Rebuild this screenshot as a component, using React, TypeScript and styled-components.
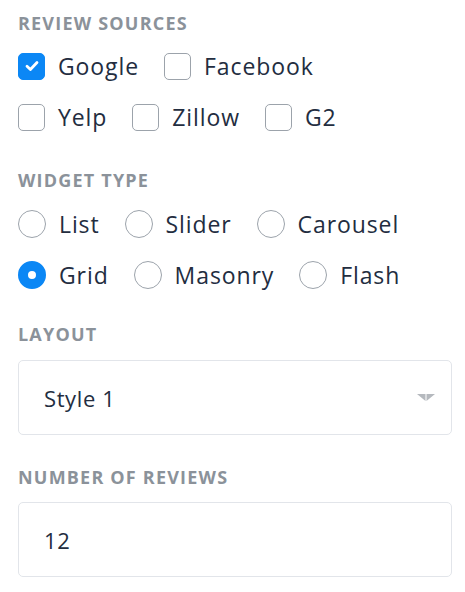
import React from "react";
import styled, { createGlobalStyle } from "styled-components";

const Global = createGlobalStyle`
  html, body { margin: 0; padding: 0; background: #ffffff; }
  body { font-family: "Open Sans", "Liberation Sans", sans-serif; }
`;

const Panel = styled.div`
  width: 465px;
  box-sizing: border-box;
  padding: 12px 13px 0 18px;
  display: flex;
  flex-direction: column;
`;

const Label = styled.div<{ $mt?: number }>`
  font-family: "Open Sans", sans-serif;
  font-weight: 700;
  font-size: 18px;
  line-height: 22px;
  color: #8b929a;
  letter-spacing: 1.2px;
  margin-top: ${(p) => p.$mt ?? 0}px;
`;

const OptionRow = styled.div<{ $mt: number }>`
  display: flex;
  align-items: center;
  margin-top: ${(p) => p.$mt}px;
  height: 28px;
`;

const Option = styled.label`
  display: flex;
  align-items: center;
  gap: 13px;
  margin-right: 25px;
  font-size: 23px;
  color: #232d3f;
  letter-spacing: 0.9px;
`;

const Box = styled.span<{ $on?: boolean }>`
  width: 27px;
  height: 27px;
  box-sizing: border-box;
  border-radius: 5px;
  border: 1px solid ${(p) => (p.$on ? "#0b87f5" : "#9ca3ab")};
  background: ${(p) => (p.$on ? "#0b87f5" : "#fff")};
  display: inline-flex;
  align-items: center;
  justify-content: center;
  flex: none;
`;

const Circle = styled.span<{ $on?: boolean }>`
  width: 28px;
  height: 28px;
  box-sizing: border-box;
  border-radius: 50%;
  border: ${(p) => (p.$on ? "10px solid #0b87f5" : "1px solid #9ca3ab")};
  background: #fff;
  flex: none;
`;

const Field = styled.div<{ $mt: number }>`
  margin-top: ${(p) => p.$mt}px;
  height: 75px;
  box-sizing: border-box;
  border: 1px solid #e2e5ea;
  border-radius: 5px;
  display: flex;
  align-items: center;
  justify-content: space-between;
  padding: 0 16px 0 25px;
  font-size: 22px;
  letter-spacing: 0.6px;
  color: #232d3f;
`;

const Check = () => (
  <svg width="16" height="16" viewBox="0 0 16 16">
    <path d="M3 8.3 L6.4 11.5 L13 4.5" fill="none" stroke="#fff" strokeWidth="2.8" strokeLinecap="round" strokeLinejoin="round" />
  </svg>
);

const Arrow = () => (
  <svg width="18" height="7" viewBox="0 0 18 7">
    <path d="M0 0 H8.5 V7 Z M9.5 0 H18 L9.5 7 Z" fill="#b5b9be" />
  </svg>
);

export default function App() {
  return (
    <>
      <Global />
      <Panel>
        <Label>REVIEW SOURCES</Label>
        <OptionRow $mt={18}>
          <Option><Box $on><Check /></Box>Google</Option>
          <Option><Box />Facebook</Option>
        </OptionRow>
        <OptionRow $mt={23}>
          <Option><Box />Yelp</Option>
          <Option><Box />Zillow</Option>
          <Option><Box />G2</Option>
        </OptionRow>
        <Label $mt={38}>WIDGET TYPE</Label>
        <OptionRow $mt={19}>
          <Option><Circle />List</Option>
          <Option><Circle />Slider</Option>
          <Option><Circle />Carousel</Option>
        </OptionRow>
        <OptionRow $mt={23}>
          <Option><Circle $on />Grid</Option>
          <Option><Circle />Masonry</Option>
          <Option><Circle />Flash</Option>
        </OptionRow>
        <Label $mt={34}>LAYOUT</Label>
        <Field $mt={15}>
          <span>Style 1</span>
          <Arrow />
        </Field>
        <Label $mt={31}>NUMBER OF REVIEWS</Label>
        <Field $mt={14}>
          <span>12</span>
        </Field>
      </Panel>
    </>
  );
}
